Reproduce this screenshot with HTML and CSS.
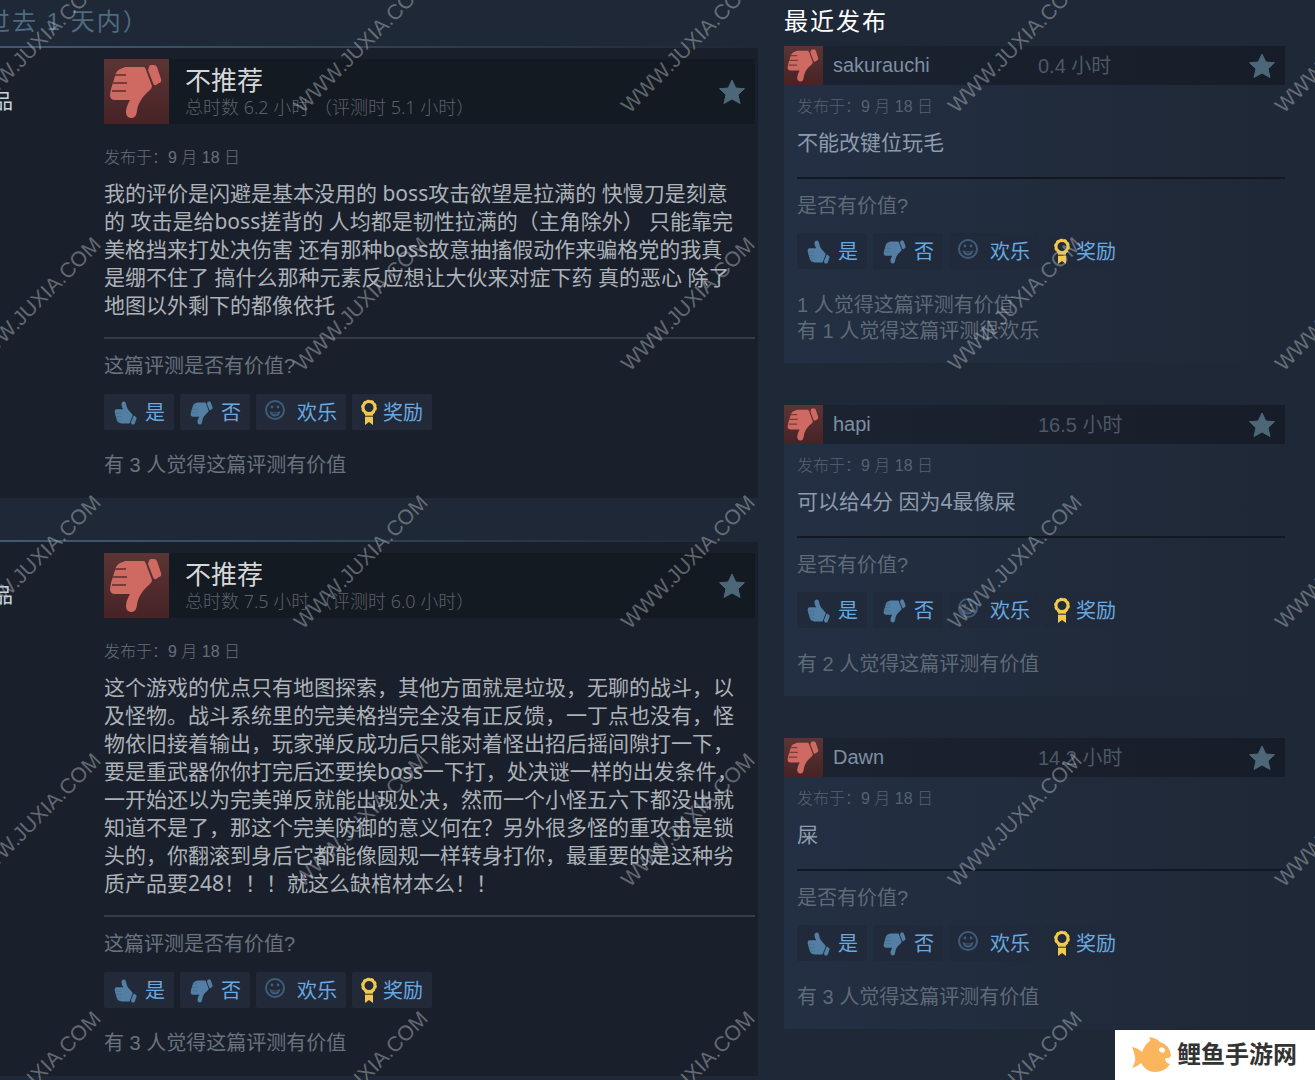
FILE: index.html
```
<!DOCTYPE html>
<html lang="zh-CN">
<head>
    <meta charset="UTF-8">
    <meta name="viewport" content="width=device-width, initial-scale=1.0">
    <title>评测</title>
    <link rel="stylesheet" href="styles.css">
</head>
<body>
    <!-- shared icons -->
    <svg class="sprite" aria-hidden="true">
        <symbol id="thumb" viewBox="0 0 65 65">
            <path d="M19 9 Q20 8 22 8 L40 8 Q41 8 42 11 L48 27 Q48 29 46 31 C38 38 34 44 33 52 Q32 59 28 59 Q22 59 22 53 Q22 48 26 41 L11 41 Q6 41 6 36 L7 30 L12 14 Q14 10 19 9 Z"/>
            <path d="M45 8 Q45 6 47 6 L50 6 Q52 6 53 8 L57 20 Q58 23 55 24 L52 26 Q50 27 49 24 L44 11 Z"/>
            <path class="thumb-lines" d="M11 16 H22 M9 24 H23 M8 32 H22"/>
        </symbol>
        <symbol id="smile" viewBox="0 0 26 26">
            <circle cx="10" cy="12" r="9" fill="none" stroke="currentColor" stroke-width="2"/>
            <circle cx="7" cy="9" r="1.4"/>
            <circle cx="13" cy="9" r="1.4"/>
            <path d="M4.5 13 Q10 16 15.500 13 Q14.500 18.500 10 18.500 Q5.500 18.500 4.500 13 Z M6.500 14.800 Q10 18 13.500 14.800 Q10 16 6.500 14.800 Z" fill-rule="evenodd"/>
        </symbol>
        <symbol id="award" viewBox="0 0 16 26">
            <path d="M4 14 H12 V26 L8 23 L4 26 Z"/>
            <circle cx="8" cy="8.500" r="6" fill="#232a3a" stroke="currentColor" stroke-width="3"/>
            <circle cx="8" cy="8.500" r="7.200" fill="none" stroke="currentColor" stroke-width="1.200" stroke-dasharray="2.800 1.700"/>
            <path d="M3 17.200 H13" stroke="#232a3a" stroke-width="1"/>
        </symbol>
        <symbol id="star" viewBox="0 0 30 30">
            <path d="M15 3 L18.800 11 L27.500 11.700 L21 17.800 L23 26.500 L15 22 L7 26.500 L9 17.800 L2.500 11.700 L11.200 11 Z" stroke="currentColor" stroke-linejoin="round"/>
        </symbol>
    </svg>

    <div class="page">
        <main class="reviews">
            <h2 class="section-title period">过去 1 天内）</h2>

            <article class="review">
                <div class="author">品</div>
                <div class="review-content">
                    <header class="review-header">
                        <svg class="rating"><use href="#thumb"/></svg>
                        <div class="summary">
                            <h3>不推荐</h3>
                            <p>总时数 6.2 小时 （评测时 5.1 小时）</p>
                        </div>
                        <svg class="star"><use href="#star"/></svg>
                    </header>
                    <p class="posted">发布于：9 月 18 日</p>
                    <p class="text">我的评价是闪避是基本没用的 boss攻击欲望是拉满的 快慢刀是刻意的 攻击是给boss搓背的 人均都是韧性拉满的（主角除外） 只能靠完美格挡来打处决伤害 还有那种boss故意抽搐假动作来骗格党的我真是绷不住了 搞什么那种元素反应想让大伙来对症下药 真的恶心 除了地图以外剩下的都像依托</p>
                    <div class="feedback">
                        <p>这篇评测是否有价值?</p>
                        <div class="votes">
                            <button type="button"><svg class="up"><use href="#thumb"/></svg>是</button>
                            <button type="button"><svg class="down"><use href="#thumb"/></svg>否</button>
                            <button type="button"><svg class="funny"><use href="#smile"/></svg>欢乐</button>
                            <button type="button"><svg class="award"><use href="#award"/></svg>奖励</button>
                        </div>
                        <p>有 3 人觉得这篇评测有价值</p>
                    </div>
                </div>
            </article>

            <article class="review">
                <div class="author">品</div>
                <div class="review-content">
                    <header class="review-header">
                        <svg class="rating"><use href="#thumb"/></svg>
                        <div class="summary">
                            <h3>不推荐</h3>
                            <p>总时数 7.5 小时 （评测时 6.0 小时）</p>
                        </div>
                        <svg class="star"><use href="#star"/></svg>
                    </header>
                    <p class="posted">发布于：9 月 18 日</p>
                    <p class="text">这个游戏的优点只有地图探索，其他方面就是垃圾，无聊的战斗，以及怪物。战斗系统里的完美格挡完全没有正反馈，一丁点也没有，怪物依旧接着输出，玩家弹反成功后只能对着怪出招后摇间隙打一下，要是重武器你你打完后还要挨boss一下打，处决谜一样的出发条件，一开始还以为完美弹反就能出现处决，然而一个小怪五六下都没出就知道不是了，那这个完美防御的意义何在？另外很多怪的重攻击是锁头的，你翻滚到身后它都能像圆规一样转身打你，最重要的是这种劣质产品要248！！！就这么缺棺材本么！！</p>
                    <div class="feedback">
                        <p>这篇评测是否有价值?</p>
                        <div class="votes">
                            <button type="button"><svg class="up"><use href="#thumb"/></svg>是</button>
                            <button type="button"><svg class="down"><use href="#thumb"/></svg>否</button>
                            <button type="button"><svg class="funny"><use href="#smile"/></svg>欢乐</button>
                            <button type="button"><svg class="award"><use href="#award"/></svg>奖励</button>
                        </div>
                        <p>有 3 人觉得这篇评测有价值</p>
                    </div>
                </div>
            </article>
        </main>

        <aside class="recent">
            <h2 class="section-title">最近发布</h2>

            <article class="card">
                <header class="card-header">
                    <svg class="rating"><use href="#thumb"/></svg>
                    <span class="name">sakurauchi</span>
                    <span class="hours">0.4 小时</span>
                    <svg class="star"><use href="#star"/></svg>
                </header>
                <div class="card-body">
                    <p class="posted">发布于：9 月 18 日</p>
                    <p class="text">不能改键位玩毛</p>
                    <div class="feedback">
                        <p>是否有价值?</p>
                        <div class="votes">
                            <button type="button"><svg class="up"><use href="#thumb"/></svg>是</button>
                            <button type="button"><svg class="down"><use href="#thumb"/></svg>否</button>
                            <button type="button"><svg class="funny"><use href="#smile"/></svg>欢乐</button>
                            <button type="button"><svg class="award"><use href="#award"/></svg>奖励</button>
                        </div>
                        <p>1 人觉得这篇评测有价值<br>有 1 人觉得这篇评测很欢乐</p>
                    </div>
                </div>
            </article>

            <article class="card">
                <header class="card-header">
                    <svg class="rating"><use href="#thumb"/></svg>
                    <span class="name">hapi</span>
                    <span class="hours">16.5 小时</span>
                    <svg class="star"><use href="#star"/></svg>
                </header>
                <div class="card-body">
                    <p class="posted">发布于：9 月 18 日</p>
                    <p class="text">可以给4分 因为4最像屎</p>
                    <div class="feedback">
                        <p>是否有价值?</p>
                        <div class="votes">
                            <button type="button"><svg class="up"><use href="#thumb"/></svg>是</button>
                            <button type="button"><svg class="down"><use href="#thumb"/></svg>否</button>
                            <button type="button"><svg class="funny"><use href="#smile"/></svg>欢乐</button>
                            <button type="button"><svg class="award"><use href="#award"/></svg>奖励</button>
                        </div>
                        <p>有 2 人觉得这篇评测有价值</p>
                    </div>
                </div>
            </article>

            <article class="card">
                <header class="card-header">
                    <svg class="rating"><use href="#thumb"/></svg>
                    <span class="name">Dawn</span>
                    <span class="hours">14.2 小时</span>
                    <svg class="star"><use href="#star"/></svg>
                </header>
                <div class="card-body">
                    <p class="posted">发布于：9 月 18 日</p>
                    <p class="text">屎</p>
                    <div class="feedback">
                        <p>是否有价值?</p>
                        <div class="votes">
                            <button type="button"><svg class="up"><use href="#thumb"/></svg>是</button>
                            <button type="button"><svg class="down"><use href="#thumb"/></svg>否</button>
                            <button type="button"><svg class="funny"><use href="#smile"/></svg>欢乐</button>
                            <button type="button"><svg class="award"><use href="#award"/></svg>奖励</button>
                        </div>
                        <p>有 3 人觉得这篇评测有价值</p>
                    </div>
                </div>
            </article>
        </aside>
    </div>

    <!-- site watermark, repeated over the page -->
    <div class="watermark" aria-hidden="true">
        <span>WWW.JUXIA.COM</span><span>WWW.JUXIA.COM</span><span>WWW.JUXIA.COM</span><span>WWW.JUXIA.COM</span><span>WWW.JUXIA.COM</span>
        <span>WWW.JUXIA.COM</span><span>WWW.JUXIA.COM</span><span>WWW.JUXIA.COM</span><span>WWW.JUXIA.COM</span><span>WWW.JUXIA.COM</span>
        <span>WWW.JUXIA.COM</span><span>WWW.JUXIA.COM</span><span>WWW.JUXIA.COM</span><span>WWW.JUXIA.COM</span><span>WWW.JUXIA.COM</span>
        <span>WWW.JUXIA.COM</span><span>WWW.JUXIA.COM</span><span>WWW.JUXIA.COM</span><span>WWW.JUXIA.COM</span><span>WWW.JUXIA.COM</span>
        <span>WWW.JUXIA.COM</span><span>WWW.JUXIA.COM</span><span>WWW.JUXIA.COM</span><span>WWW.JUXIA.COM</span><span>WWW.JUXIA.COM</span>
    </div>

    <div class="site-logo">
        <svg viewBox="0 0 42 38">
            <path d="M19 5 Q20 3 18 1 Q26 2 29 6 Q39 9 40 20 Q38 23 34 22 Q34 27 39 28 Q34 36 24 36 Q15 36 10 27 Q6 31 1 32 Q5 26 4 21 Q3 15 1 11 Q7 12 11 16 Q14 8 19 5 Z" fill="#fbb55c"/>
            <ellipse cx="31" cy="14" rx="3" ry="2.500" transform="rotate(35 31 14)" fill="#fff"/>
        </svg>
        <span>鲤鱼手游网</span>
    </div>
</body>
</html>
```
FILE: styles.css
```
* {
    box-sizing: border-box;
}
body {
    position: relative;
    margin: 0;
    min-height: 100vh;
    overflow-x: hidden;
    background-color: #1f2836;
    color: #acb2b8;
    font-family: "Liberation Sans", "Noto Sans CJK SC", sans-serif;
    font-size: 20px;
}
h2, h3, p {
    margin: 0;
    font-weight: normal;
}
svg {
    display: block;
    flex-shrink: 0;
    fill: currentColor;
}
.sprite {
    position: absolute;
    width: 0;
    height: 0;
}
.page {
    display: grid;
    grid-template-columns: minmax(0, 1fr) 501px;
    gap: 26px;
    padding-right: 30px;
}
.section-title {
    height: 46px;
    padding-top: 5px;
    color: #fff;
    font-size: 24px;
    line-height: 34px;
    letter-spacing: 2px;
}
.period {
    margin-left: -14px;
    color: #4f6b80;
}

/* main column */
.review {
    display: grid;
    grid-template-columns: 104px minmax(0, 1fr);
    margin-bottom: 42px;
    padding: 13px 3px 20px 0;
    background: linear-gradient(to right, #425a70, #1f2836) top / 100% 2px no-repeat #1a202b;
}
.review:last-child {
    margin-bottom: 0;
}
.author {
    margin-left: -7px;
    padding-top: 29px;
    color: #c6d4df;
    line-height: 28px;
}
.review-header {
    display: flex;
    align-items: center;
    height: 65px;
    padding-right: 8px;
    background-color: #131a22;
}
.rating {
    width: 65px;
    height: 65px;
    background: linear-gradient(#5c3434, #472326);
    color: #cf6a63;
}
.thumb-lines {
    fill: none;
    stroke: var(--finger-line, #7a3b3b);
    stroke-width: 2;
}
.summary {
    flex: 1;
    padding: 0 0 2px 16px;
}
.summary h3 {
    color: #d6d7d8;
    font-size: 26px;
    line-height: 32px;
}
.summary p {
    color: #5b6167;
    font-family: "Noto Sans", "Noto Sans CJK SC", sans-serif;
    font-size: 18px;
    font-weight: 300;
    line-height: 20px;
}
.star {
    width: 30px;
    height: 30px;
    color: #4c6778;
}
.posted {
    color: #65707b;
    font-size: 16px;
    font-weight: 300;
    line-height: 24px;
}
.review .posted {
    margin: 22px 0 9px;
}
.text {
    font-family: "Noto Sans", "Noto Sans CJK SC", sans-serif;
    font-size: 21px;
    line-height: 28px;
}
.review .text {
    margin-bottom: 18px;
    padding-right: 14px;
}
.feedback {
    padding-top: 14px;
    border-top: 2px solid #363c46;
    color: #68737e;
    font-weight: 300;
    line-height: 26px;
}
.votes {
    display: flex;
    gap: 6px;
    margin: 15px 0 22px;
}
.votes button {
    display: flex;
    align-items: center;
    gap: 6px;
    height: 36px;
    padding: 0 9px 2px;
    border: none;
    border-radius: 2px;
    background-color: #222a39;
    color: #67a9e0;
    font-family: inherit;
    font-size: 20px;
    cursor: pointer;
}
.votes svg {
    --finger-line: #476f90;
    width: 26px;
    height: 26px;
    color: #527fa3;
}
.votes .up, .votes .down {
    width: 28px;
    height: 28px;
    margin: 4px -1px 0;
}
.votes .up {
    transform: scaleY(-1);
}
.votes .funny {
    color: #3f5d7a;
}
.votes .award {
    width: 16px;
    margin-top: 2px;
    color: #f0c94e;
}

/* recent reviews */
.card {
    margin-bottom: 42px;
    padding-bottom: 19px;
    background: linear-gradient(to right, #232f43, #1f2836);
}
.card:last-child {
    margin-bottom: 0;
}
.card-header {
    display: flex;
    align-items: center;
    height: 39px;
    padding-right: 8px;
    background: linear-gradient(to right, #1b2331, #171d28);
}
.card .rating {
    width: 39px;
    height: 39px;
}
.name {
    width: 215px;
    padding-left: 10px;
    color: #7e8fa3;
}
.hours {
    flex: 1;
    color: #4c5865;
    line-height: 24px;
}
.card-body {
    padding-left: 13px;
}
.card .posted {
    padding-top: 10px;
    color: #566270;
}
.card .text {
    padding: 9px 0 21px;
    color: #8d9bad;
}
.card .feedback {
    border-top-color: #121822;
    color: #5f6a78;
}
.card .votes {
    margin: 14px 0 23px;
}
.card .votes button {
    background-color: #212a3a;
}

/* watermark and logo */
.watermark {
    position: absolute;
    inset: 0;
    display: grid;
    grid-template-columns: repeat(5, 327px);
    grid-auto-rows: 258px;
    overflow: hidden;
    color: rgba(190, 195, 203, 0.45);
    font-size: 21px;
    pointer-events: none;
}
.watermark span {
    width: 190px;
    height: 24px;
    margin: 34px 0 0 -61px;
    line-height: 24px;
    text-align: center;
    transform: rotate(-45deg);
}
.site-logo {
    position: absolute;
    right: 0;
    bottom: 0;
    display: flex;
    align-items: center;
    gap: 4px;
    width: 200px;
    height: 50px;
    padding-left: 16px;
    background-color: #fff;
    color: #333;
    font-size: 24px;
    font-weight: bold;
    line-height: 30px;
}
.site-logo svg {
    width: 42px;
    height: 38px;
}
```
